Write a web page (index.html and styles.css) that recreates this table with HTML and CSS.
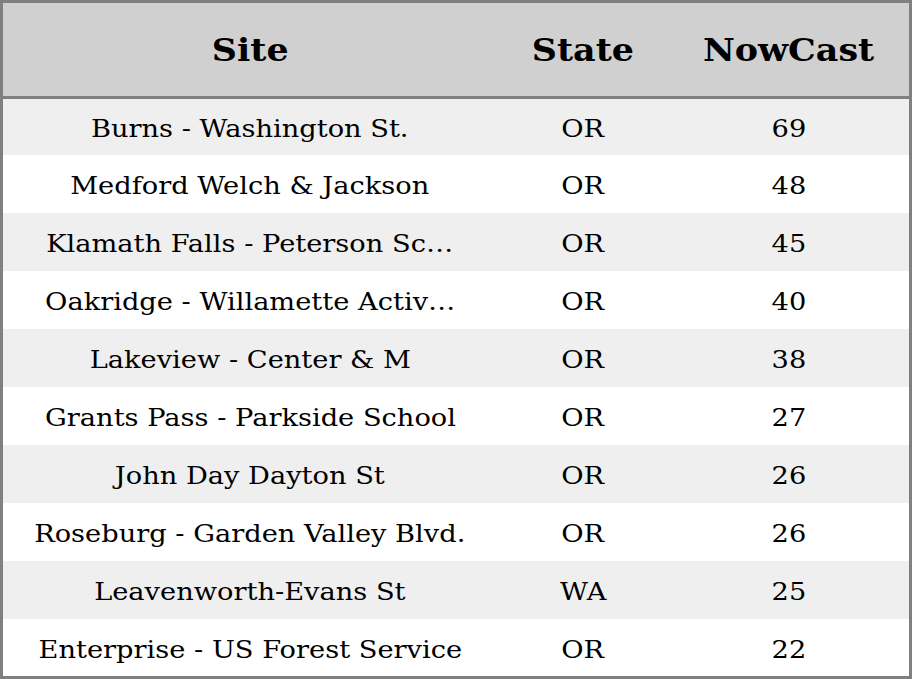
FILE: index.html
```html
<!DOCTYPE html>
<html>
<head>
<meta charset="utf-8">
<link rel="stylesheet" href="styles.css">
</head>
<body>
<table class="aq-table">
  <colgroup>
    <col class="col-site">
    <col class="col-state">
    <col class="col-now">
  </colgroup>
  <thead>
    <tr><th><span class="txt">Site</span></th><th><span class="txt">State</span></th><th><span class="txt">NowCast</span></th></tr>
  </thead>
  <tbody>
    <tr><td><span class="txt">Burns - Washington St.</span></td><td><span class="txt">OR</span></td><td><span class="txt">69</span></td></tr>
    <tr><td><span class="txt">Medford Welch &amp; Jackson</span></td><td><span class="txt">OR</span></td><td><span class="txt">48</span></td></tr>
    <tr><td><span class="txt">Klamath Falls - Peterson Sc…</span></td><td><span class="txt">OR</span></td><td><span class="txt">45</span></td></tr>
    <tr><td><span class="txt">Oakridge - Willamette Activ…</span></td><td><span class="txt">OR</span></td><td><span class="txt">40</span></td></tr>
    <tr><td><span class="txt">Lakeview - Center &amp; M</span></td><td><span class="txt">OR</span></td><td><span class="txt">38</span></td></tr>
    <tr><td><span class="txt">Grants Pass - Parkside School</span></td><td><span class="txt">OR</span></td><td><span class="txt">27</span></td></tr>
    <tr><td><span class="txt">John Day Dayton St</span></td><td><span class="txt">OR</span></td><td><span class="txt">26</span></td></tr>
    <tr><td><span class="txt">Roseburg - Garden Valley Blvd.</span></td><td><span class="txt">OR</span></td><td><span class="txt">26</span></td></tr>
    <tr><td><span class="txt">Leavenworth-Evans St</span></td><td><span class="txt">WA</span></td><td><span class="txt">25</span></td></tr>
    <tr><td><span class="txt">Enterprise - US Forest Service</span></td><td><span class="txt">OR</span></td><td><span class="txt">22</span></td></tr>
  </tbody>
</table>
</body>
</html>
```
FILE: styles.css
```css
html, body {
  margin: 0;
  padding: 0;
  background: #ffffff;
}
.aq-table {
  width: 912px;
  height: 679px;
  border-collapse: separate;
  border-spacing: 0;
  border: 3px solid #808080;
  box-sizing: border-box;
  table-layout: fixed;
  font-family: "DejaVu Serif", serif;
  color: #000;
}
.col-site { width: 494px; }
.col-state { width: 172px; }
.col-now { width: 240px; }
.txt {
  display: inline-block;
  transform: scaleX(1.09);
  transform-origin: center;
}
.aq-table th {
  height: 93px;
  padding: 0;
  background: #d0d0d0;
  border-bottom: 3px solid #808080;
  font-size: 32px;
  font-weight: bold;
  text-align: center;
  vertical-align: middle;
}
.aq-table tbody tr { height: 58px; }
.aq-table tbody tr:first-child { height: 56px; }
.aq-table tbody tr:last-child { height: 57px; }
.aq-table td {
  padding: 3px 0 0 0;
  font-size: 25px;
  text-align: center;
  vertical-align: middle;
  white-space: nowrap;
}
.aq-table tbody tr:nth-child(odd) td { background: #efefef; }
.aq-table tbody tr:nth-child(even) td { background: #ffffff; }
```
